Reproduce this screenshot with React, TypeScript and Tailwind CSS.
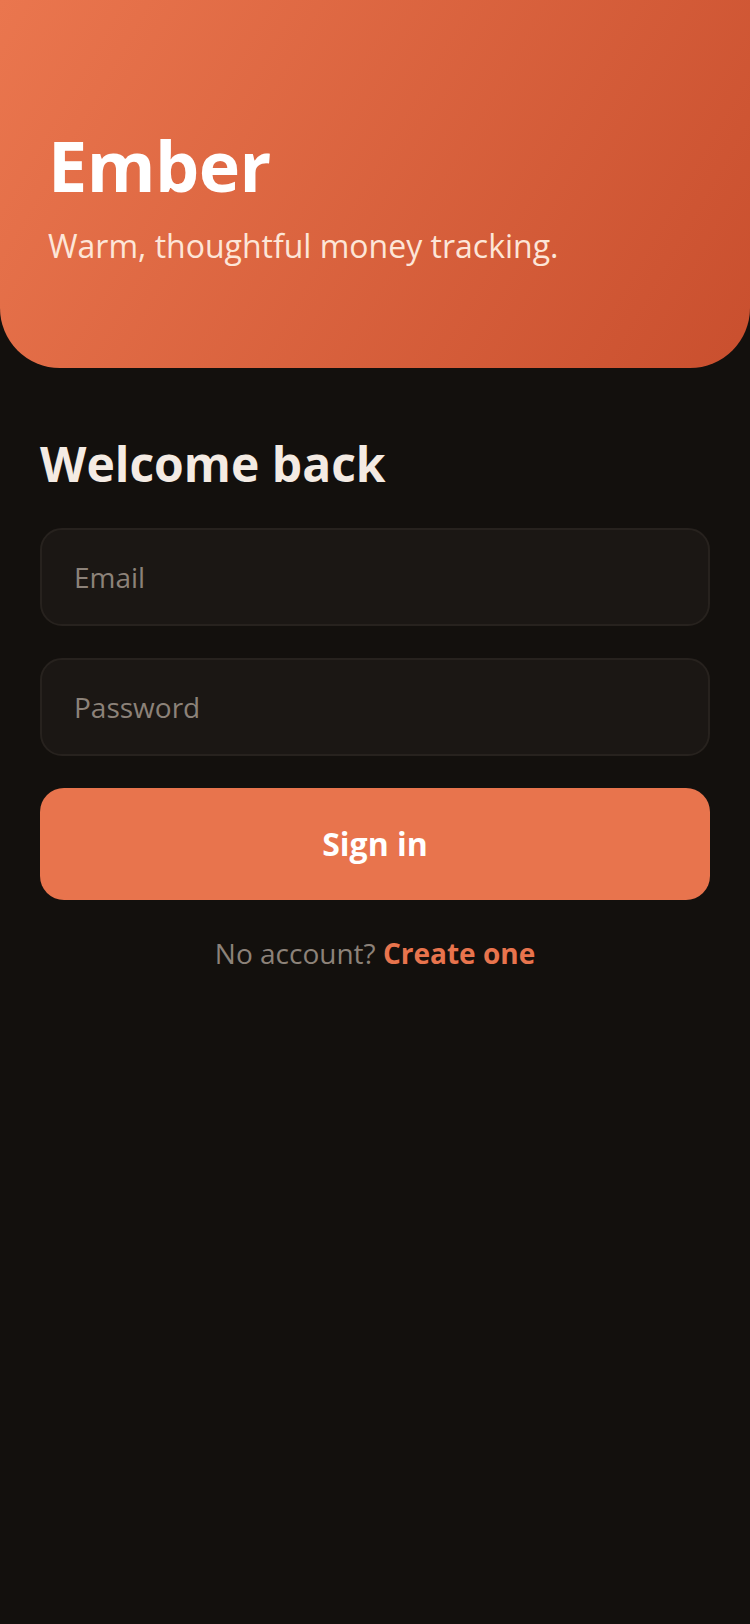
export default function App() {
  return (
    <div className="min-h-screen bg-[#13100d] font-['Open_Sans',sans-serif]">
      <header className="h-[368px] rounded-b-[60px] bg-[linear-gradient(120deg,#ea764e_0%,#c94f2e_100%)] px-12 pt-[130px]">
        <h1 className="text-[70px] font-bold leading-none text-white tracking-[-0.5px]">Ember</h1>
        <p className="mt-[30px] text-[32px] leading-none text-[#fde6d8]">Warm, thoughtful money tracking.</p>
      </header>

      <main className="px-10 pt-[72px]">
        <h2 className="text-[48px] font-bold leading-none text-[#f4ebe3]">Welcome back</h2>

        <div className="mt-[40px] flex flex-col gap-8">
          <input
            type="email"
            placeholder="Email"
            className="h-[98px] w-full rounded-[22px] border-2 border-[#27221e] bg-[#1b1714] px-8 text-[28px] text-[#f4ebe3] outline-none placeholder:text-[#8c8279]"
          />
          <input
            type="password"
            placeholder="Password"
            className="h-[98px] w-full rounded-[22px] border-2 border-[#27221e] bg-[#1b1714] px-8 text-[28px] text-[#f4ebe3] outline-none placeholder:text-[#8c8279]"
          />
          <button className="h-[112px] w-full rounded-[24px] bg-[#e8744d] text-[32px] font-bold text-white">
            Sign in
          </button>
        </div>

        <p className="mt-[32px] text-center text-[28px] text-[#8c8279]">
          No account? <span className="font-bold text-[#e8744d]">Create one</span>
        </p>
      </main>
    </div>
  )
}
